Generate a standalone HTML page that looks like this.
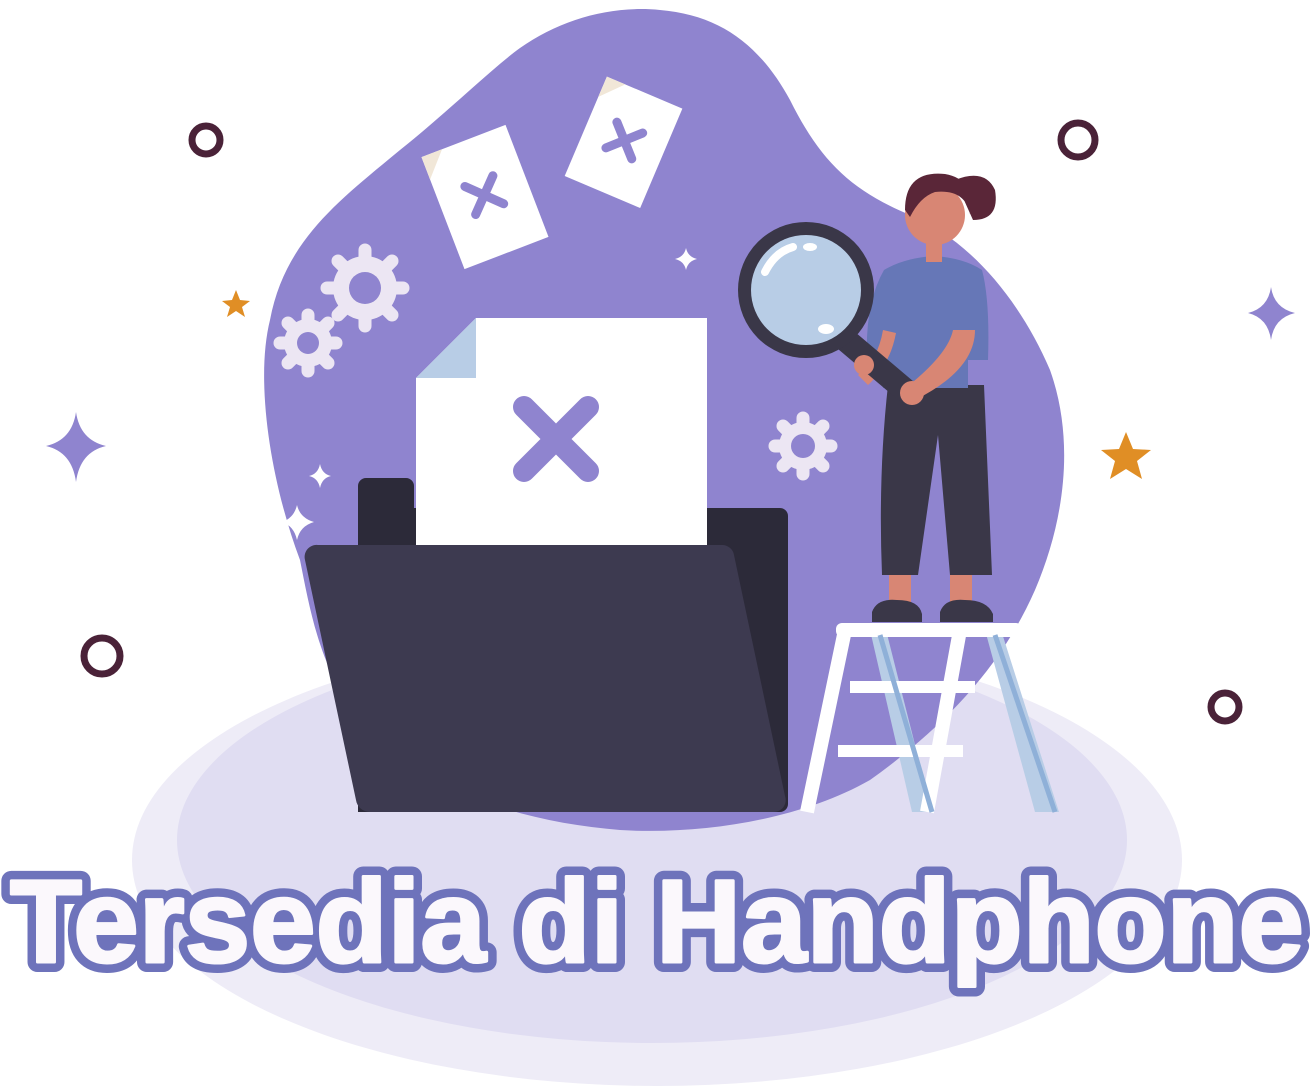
<!DOCTYPE html>
<html><head><meta charset="utf-8"><style>
html,body{margin:0;padding:0;background:#fff;width:1313px;height:1088px;overflow:hidden}
svg{display:block}
</style></head><body>
<svg width="1313" height="1088" viewBox="0 0 1313 1088" xmlns="http://www.w3.org/2000/svg">
<ellipse cx="657" cy="860" rx="525" ry="226" fill="#eeecf7"/>
<ellipse cx="652" cy="840" rx="475" ry="203" fill="#e0ddf2"/>
<path d="M300,560 C270,480 255,380 270,320 C285,240 340,200 400,150 C450,110 490,70 520,48 C560,20 610,5 660,10 C720,15 760,45 790,100 C820,160 850,190 910,215 C970,240 1020,300 1050,370 C1075,440 1065,520 1035,590 C1000,670 940,730 870,780 C800,820 700,835 620,830 C520,822 420,790 360,720 C320,670 310,610 300,560 Z" fill="#8f84cf"/>
<g fill="none" stroke="#4a2238" stroke-width="7">
<circle cx="206" cy="140" r="14"/><circle cx="1078" cy="140" r="17"/>
<circle cx="102" cy="656" r="18"/><circle cx="1225" cy="707" r="14"/>
</g>
<path d="M76,412 Q80,440 106,446 Q80,452 76,482 Q72,452 46,446 Q72,440 76,412Z" fill="#8f84cf"/>
<path d="M1271,287 Q1274,308 1295,313 Q1274,318 1271,340 Q1268,318 1248,313 Q1268,308 1271,287Z" fill="#8f84cf"/>
<path d="M236,290 l4,10 10,1 -8,6 3,10 -9,-6 -9,6 3,-10 -8,-6 10,-1Z" fill="#e08e25"/>
<path d="M1126,432 l7,17 18,1 -14,11 5,18 -16,-10 -16,10 5,-18 -14,-11 18,-1Z" fill="#e08e25"/>
<g fill="#fff">
<path d="M686,248 Q688,257 697,259 Q688,261 686,270 Q684,261 675,259 Q684,257 686,248Z"/>
<path d="M320,464 Q322,474 331,476 Q322,478 320,488 Q318,478 309,476 Q318,474 320,464Z"/>
<path d="M297,505 Q300,518 314,522 Q300,526 297,540 Q294,526 282,522 Q294,518 297,505Z"/>
</g>
<g fill="#ece6f3">
<circle cx="365" cy="288" r="32"/><circle cx="308" cy="343" r="24"/><circle cx="803" cy="446" r="24"/>
<g stroke="#ece6f3" stroke-width="13" stroke-linecap="round">
<path d="M365,250v76M327,288h76M338,261l54,54M392,261l-54,54"/>
<path d="M308,315v56M280,343h56M288,323l40,40M328,323l-40,40"/>
<path d="M803,418v56M775,446h56M783,426l40,40M823,426l-40,40"/>
</g></g>
<g fill="#8f84cf"><circle cx="365" cy="288" r="16"/><circle cx="308" cy="343" r="11"/><circle cx="803" cy="446" r="12"/></g>
<g transform="rotate(-21 485 197)"><rect x="440" y="137" width="90" height="120" fill="#fff"/><path d="M440,137 h22 l-22,24Z" fill="#f1e7d8"/>
<path d="M470,180 l30,30 M500,180 l-30,30" stroke="#8f84cf" stroke-width="9" stroke-linecap="round"/></g>
<g transform="rotate(23 623 141)"><rect x="583" y="88" width="82" height="108" fill="#fff"/><path d="M583,88 h20 l-20,22Z" fill="#f1e7d8"/>
<path d="M610,126 l28,28 M638,126 l-28,28" stroke="#8f84cf" stroke-width="9" stroke-linecap="round"/></g>
<path d="M366,478 h40 a8,8 0 0 1 8,8 v22 h366 a8,8 0 0 1 8,8 v288 a8,8 0 0 1 -8,8 h-422 v-326 a8,8 0 0 1 8,-8Z" fill="#2c2a39"/>
<path d="M416,378 L476,318 H707 V560 H416Z" fill="#fff"/>
<path d="M416,378 L476,318 V378Z" fill="#b8cde6"/>
<path d="M524,407 l64,64 M588,407 l-64,64" stroke="#8f84cf" stroke-width="22" stroke-linecap="round"/>
<path d="M318,545 H722 a12,12 0 0 1 12,10 L785,796 a12,12 0 0 1 -12,16 H370 a14,14 0 0 1 -14,-12 L305,560 a12,12 0 0 1 13,-15Z" fill="#3d3a50"/>
<g>
<path d="M870,630 h16 l46,182 h-20Z M985,630 h16 l58,182 h-24Z" fill="#b8cde6"/>
<path d="M845,630 l-38,182 M960,630 l-33,182" stroke="#fff" stroke-width="14"/>
<rect x="836" y="623" width="186" height="14" rx="6" fill="#fff"/>
<rect x="850" y="681" width="125" height="12" fill="#fff"/>
<rect x="838" y="745" width="125" height="12" fill="#fff"/>
<path d="M880,635 l52,177 M995,635 l60,177" stroke="#8fb0d8" stroke-width="5"/>
</g>
<path d="M889,575 h22 v30 h-22Z M950,575 h22 v30 h-22Z" fill="#d88674"/>
<path d="M872,612 q5,-14 25,-12 q22,0 25,14 v8 h-50Z M940,612 q5,-14 25,-12 q22,0 28,14 v8 h-53Z" fill="#3a3748"/>
<path d="M888,385 h96 l8,190 h-42 l-12,-140 l-20,140 h-36 q-4,-100 6,-190Z" fill="#3a3748"/>
<path d="M884,270 q20,-12 50,-14 q30,2 48,14 q8,30 6,90 h-20 v28 h-85 v-30 h-16 q-2,-55 17,-88Z" fill="#6677b7"/>
<circle cx="935" cy="215" r="30" fill="#d88674"/>
<path d="M905,210 q0,-40 40,-36 q30,5 25,40 q-5,-25 -35,-22 q-15,5 -25,25Z M955,180 q30,-12 40,10 q5,30 -22,30Z" fill="#5a2638"/>
<rect x="926" y="240" width="16" height="22" fill="#d88674"/>
<path d="M975,330 q0,40 -60,70 l-12,-10 q45,-35 50,-60Z" fill="#d88674"/>
<path d="M883,330 q-5,30 -25,45 l10,10 q22,-20 28,-52Z" fill="#d88674"/>
<path d="M840,335 l65,55" stroke="#3a3748" stroke-width="24" stroke-linecap="round"/>
<circle cx="806" cy="290" r="68" fill="#3a3748"/>
<circle cx="806" cy="290" r="55" fill="#b8cde6"/>
<path d="M765,272 q10,-20 28,-25" stroke="#fff" stroke-width="8" stroke-linecap="round" fill="none"/>
<ellipse cx="810" cy="247" rx="7" ry="4" fill="#fff"/><ellipse cx="826" cy="329" rx="8" ry="5" fill="#fff"/>
<circle cx="864" cy="365" r="10" fill="#d88674"/><circle cx="912" cy="393" r="12" fill="#d88674"/>
<text x="10" y="962" textLength="1294" lengthAdjust="spacingAndGlyphs" font-family="Liberation Sans, sans-serif" font-weight="bold" font-size="118" fill="#6e73bb" stroke="#6e73bb" stroke-width="20" stroke-linejoin="round">Tersedia di Handphone</text>
<text x="10" y="962" textLength="1294" lengthAdjust="spacingAndGlyphs" font-family="Liberation Sans, sans-serif" font-weight="bold" font-size="118" fill="#fbf8fc" stroke="#fbf8fc" stroke-width="3" stroke-linejoin="round">Tersedia di Handphone</text>
</svg>
</body></html>
